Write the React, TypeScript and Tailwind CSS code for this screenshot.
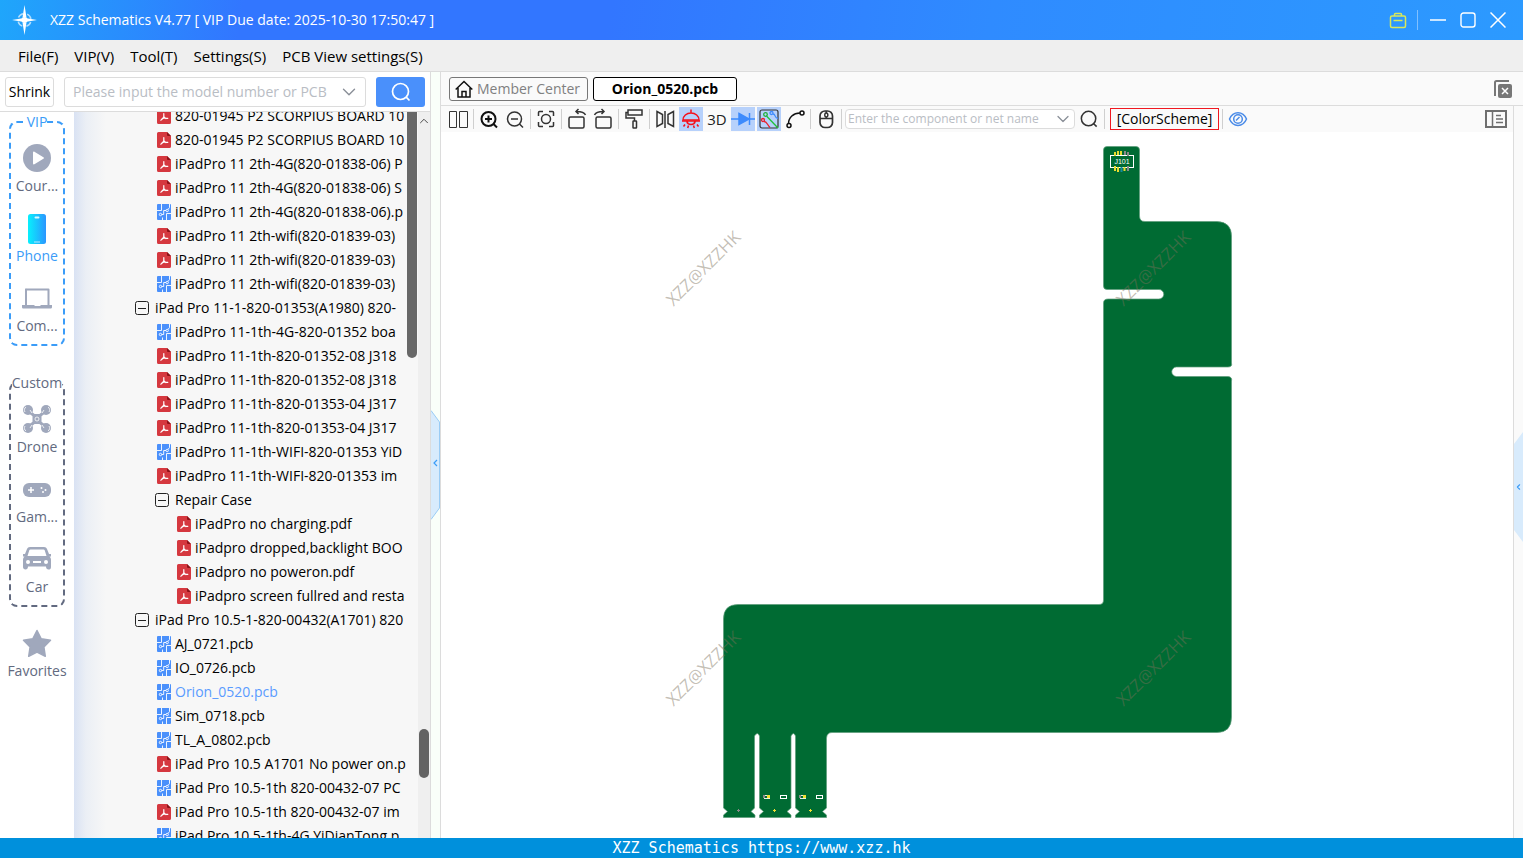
import React, { useState } from 'react';
import { ChevronDown, ChevronUp, ChevronLeft } from 'lucide-react';

type RowKind = 'pdf' | 'pcb' | 'folder';

interface TreeRow {
  kind: RowKind;
  level: 1 | 2 | 3;
  label: string;
}

const rows: TreeRow[] = [
  { kind: 'pdf', level: 2, label: '820-01945 P2 SCORPIUS BOARD 10' },
  { kind: 'pdf', level: 2, label: '820-01945 P2 SCORPIUS BOARD 10' },
  { kind: 'pdf', level: 2, label: 'iPadPro 11 2th-4G(820-01838-06) P' },
  { kind: 'pdf', level: 2, label: 'iPadPro 11 2th-4G(820-01838-06) S' },
  { kind: 'pcb', level: 2, label: 'iPadPro 11 2th-4G(820-01838-06).p' },
  { kind: 'pdf', level: 2, label: 'iPadPro 11 2th-wifi(820-01839-03)' },
  { kind: 'pdf', level: 2, label: 'iPadPro 11 2th-wifi(820-01839-03)' },
  { kind: 'pcb', level: 2, label: 'iPadPro 11 2th-wifi(820-01839-03)' },
  { kind: 'folder', level: 1, label: 'iPad Pro 11-1-820-01353(A1980) 820-' },
  { kind: 'pcb', level: 2, label: 'iPadPro 11-1th-4G-820-01352 boa' },
  { kind: 'pdf', level: 2, label: 'iPadPro 11-1th-820-01352-08 J318' },
  { kind: 'pdf', level: 2, label: 'iPadPro 11-1th-820-01352-08 J318' },
  { kind: 'pdf', level: 2, label: 'iPadPro 11-1th-820-01353-04 J317' },
  { kind: 'pdf', level: 2, label: 'iPadPro 11-1th-820-01353-04 J317' },
  { kind: 'pcb', level: 2, label: 'iPadPro 11-1th-WIFI-820-01353 YiD' },
  { kind: 'pdf', level: 2, label: 'iPadPro 11-1th-WIFI-820-01353 im' },
  { kind: 'folder', level: 2, label: 'Repair Case' },
  { kind: 'pdf', level: 3, label: 'iPadPro no charging.pdf' },
  { kind: 'pdf', level: 3, label: 'iPadpro dropped,backlight BOO' },
  { kind: 'pdf', level: 3, label: 'iPadpro no poweron.pdf' },
  { kind: 'pdf', level: 3, label: 'iPadpro screen fullred and resta' },
  { kind: 'folder', level: 1, label: 'iPad Pro 10.5-1-820-00432(A1701) 820' },
  { kind: 'pcb', level: 2, label: 'AJ_0721.pcb' },
  { kind: 'pcb', level: 2, label: 'IO_0726.pcb' },
  { kind: 'pcb', level: 2, label: 'Orion_0520.pcb' },
  { kind: 'pcb', level: 2, label: 'Sim_0718.pcb' },
  { kind: 'pcb', level: 2, label: 'TL_A_0802.pcb' },
  { kind: 'pdf', level: 2, label: 'iPad Pro 10.5 A1701 No power on.p' },
  { kind: 'pcb', level: 2, label: 'iPad Pro 10.5-1th 820-00432-07 PC' },
  { kind: 'pdf', level: 2, label: 'iPad Pro 10.5-1th 820-00432-07 im' },
  { kind: 'pcb', level: 2, label: 'iPad Pro 10.5-1th-4G YiDianTong.p' },
];

const filePad = { 1: 'pl-[63px]', 2: 'pl-[83px]', 3: 'pl-[103px]' };
const folderPad = { 1: 'pl-[61px]', 2: 'pl-[81px]', 3: 'pl-[101px]' };

const PdfIcon = () => (
  <svg width="14" height="16" viewBox="0 0 14 16" className="shrink-0">
    <path d="M1.500 0H10l4 4v10.500a1.500 1.500 0 0 1-1.500 1.500h-11A1.500 1.500 0 0 1 0 14.500v-13A1.500 1.500 0 0 1 1.500 0z" fill="#d5383f" />
    <path d="M10 0l4 4h-3a1 1 0 0 1-1-1z" fill="#8c1218" />
    <path d="M6.800 5.500v3.200M6.800 8.700C6.300 10 5 11.500 3.800 12.200M5.200 10.600c1.500-.6 3.500-.9 5.600-.2M6.800 8.700c.6.900 1.300 1.500 2.200 1.900" fill="none" stroke="#fff" strokeWidth="1.200" strokeLinecap="round" />
  </svg>
);

const PcbIcon = () => (
  <svg width="14" height="16" viewBox="0 0 14 16" className="shrink-0">
    <rect width="14" height="16" rx="1" fill="#4a90fb" />
    <g fill="none" stroke="#fff" strokeWidth=".9">
      <path d="M4.500 0v6.500H0M4.700 10.500h2v-4H9M9.500 16V9.500H14M5.500 16v-2.500" />
      <circle cx="3.500" cy="10.500" r="1.200" />
      <circle cx="10.200" cy="6.500" r="1.200" />
      <path d="M11 5.500l1.500-2V0" />
    </g>
  </svg>
);

const FolderToggle = () => (
  <svg width="14" height="14" viewBox="0 0 14 14" className="shrink-0" fill="none" stroke="#222">
    <rect x=".5" y=".5" width="13" height="13" rx="2" />
    <path d="M3 7.500h8" />
  </svg>
);

const SearchIcon = ({ size, color }: { size: number; color: string }) => (
  <svg width={size} height={size} viewBox="0 0 20 20" fill="none" stroke={color} strokeWidth="1.700">
    <circle cx="9.500" cy="9.500" r="8" />
    <path d="M15.200 15.200l3.300 3.300" />
  </svg>
);

interface NavItemProps {
  label: string;
  active?: boolean;
  children: React.ReactNode;
}

const NavItem = ({ label, active, children }: NavItemProps) => (
  <button className={`flex h-[60px] w-full flex-col items-center gap-1 text-sm leading-5 ${active ? 'text-[#3b9cf8]' : 'text-[#626a80]'}`}>
    <svg width="30" height="28" viewBox="0 0 30 28" className="shrink-0 overflow-visible" fill="#a0a8bc">
      {children}
    </svg>
    <span className="whitespace-nowrap">{label}</span>
  </button>
);

const Sidebar = () => (
  <nav className="flex w-[74px] shrink-0 flex-col items-center bg-white pt-0.5">
    <fieldset className="w-14 min-w-0 rounded-lg border-2 border-dashed border-[#3b9cf8] pt-3.5">
      <legend className="mx-auto text-sm leading-4 text-[#3b9cf8]">VIP</legend>
      <div className="flex flex-col items-center gap-2.5">
        <NavItem label="Cour...">
          <circle cx="15" cy="14" r="14" />
          <path d="M11 8.500c0-.8.700-1.200 1.400-.8l9 5.500c.7.400.7 1.200 0 1.600l-9 5.500c-.7.400-1.400 0-1.400-.8z" fill="#fff" />
        </NavItem>
        <NavItem label="Phone" active>
          <defs>
            <linearGradient id="phoneFill">
              <stop offset="0" stopColor="#08f0fc" />
              <stop offset="1" stopColor="#2b96ff" />
            </linearGradient>
          </defs>
          <rect x="6" y="0" width="18" height="30" rx="2.500" fill="url(#phoneFill)" />
          <rect x="12.500" y="2.500" width="5" height="2" rx="1" fill="#d8faff" />
          <rect x="12" y="27.500" width="6" height="1" fill="#b8eaff" />
        </NavItem>
        <NavItem label="Com...">
          <path d="M4.500 4.500h22a1 1 0 0 1 1 1V21h2.500v2c0 1-.7 1.500-1.500 1.500h-27C.700 24.500 0 24 0 23v-2h3V5.500a1 1 0 0 1 1.500-1zM5 6.500V21h7l1 1h5l1-1h6.500V6.500z" fillRule="evenodd" />
        </NavItem>
      </div>
    </fieldset>

    <fieldset className="mt-[29px] w-14 min-w-0 rounded-lg border-2 border-dashed border-[#626a80] pt-3.5">
      <legend className="mx-auto text-sm leading-4 text-[#626a80]">Custom</legend>
      <div className="flex flex-col items-center gap-2.5">
        <NavItem label="Drone">
          <path d="M5 5l7 5.500h6L25 5M5 23l7-5.500h6l7 5.500" stroke="#a0a8bc" strokeWidth="3" fill="none" />
          <rect x="10.500" y="9" width="9" height="10" rx="3" />
          <circle cx="6" cy="5" r="5" />
          <circle cx="24" cy="5" r="5" />
          <circle cx="6" cy="23" r="5" />
          <circle cx="24" cy="23" r="5" />
          <g fill="none" stroke="#fff" strokeWidth=".8">
            <circle cx="15" cy="14" r="2" />
            <path d="M3 7a3.500 3.500 0 0 1 1-5M27 7a3.500 3.500 0 0 0-1-5M3 21a3.500 3.500 0 0 0 1 5M27 21a3.500 3.500 0 0 1-1 5" />
            <path d="M8 5l2 3M22 5l-2 3M8 23l2-3M22 23l-2-3" />
          </g>
        </NavItem>
        <NavItem label="Gam...">
          <rect x="1" y="8" width="28" height="14" rx="6" />
          <path d="M9 12v6M6 15h6" stroke="#fff" strokeWidth="1.500" />
          <circle cx="19.500" cy="13" r="1" fill="#fff" />
          <circle cx="21" cy="17" r="1" fill="#fff" />
          <circle cx="23.500" cy="15" r="1" fill="#fff" />
        </NavItem>
        <NavItem label="Car">
          <path
            d="M8 2h14c1.500 0 2.500.8 3 2l2 5h2v2.500h-1.500c1 .8 1.500 2 1.500 3.500v7c0 2-1 2.500-2.500 2.500S24 23.500 24 21.500H6C6 23.500 5 24.500 3.500 24.500S1 23.500 1 22v-7c0-1.500.5-2.700 1.500-3.500H1V9h2l2-5c.5-1.200 1.500-2 3-2zM8.500 4.500c-.6 0-1 .3-1.200.8L5.500 11h19l-1.800-5.700c-.2-.5-.6-.8-1.200-.8zM6 15a2 2 0 1 0 .01 4A2 2 0 0 0 6 15zM24 15a2 2 0 1 0 .01 4A2 2 0 0 0 24 15zM11 16v2h8v-2z"
            fillRule="evenodd"
          />
        </NavItem>
      </div>
    </fieldset>

    <div className="mt-[22px] w-full">
      <NavItem label="Favorites">
        <path d="M15 1.500l4.200 8.300 9.300 1.500-6.600 6.700 1.400 9.300-8.300-4.200-8.300 4.200L8.100 18 1.500 11.300l9.300-1.500z" stroke="#a0a8bc" strokeWidth="1.500" strokeLinejoin="round" />
      </NavItem>
    </div>
  </nav>
);

interface FileTreeProps {
  selected: number;
  onSelect: (index: number) => void;
}

const FileTree = ({ selected, onSelect }: FileTreeProps) => (
  <div className="flex min-w-0 flex-1 bg-[linear-gradient(90deg,#d9e2f3_0px,#ebeff5_12px,#f7f7f7_32px)]">
    <ul className="-mt-2 min-w-0 flex-1">
      {rows.map((row, i) => (
        <li key={i}>
          <button
            onClick={() => onSelect(i)}
            className={`flex h-6 w-full items-center overflow-hidden whitespace-nowrap text-sm ${
              row.kind === 'folder' ? `gap-1.5 ${folderPad[row.level]}` : `gap-1 ${filePad[row.level]}`
            } ${selected === i ? 'text-[#5a9bff]' : 'text-black'}`}
          >
            {row.kind === 'folder' && <FolderToggle />}
            {row.kind === 'pdf' && <PdfIcon />}
            {row.kind === 'pcb' && <PcbIcon />}
            <span>{row.label}</span>
          </button>
        </li>
      ))}
    </ul>
    {/* Inner scroll thumb */}
    <div className="w-3 px-px">
      <div className="h-[246px] rounded-b-full bg-[#686868]" />
    </div>
    {/* Outer scrollbar */}
    <div className="flex w-3 flex-col items-center bg-[#efefef] pt-0.5">
      <ChevronUp size={14} className="shrink-0 text-[#333]" strokeWidth={1.5} />
      <div className="mt-[601px] h-[49px] w-2.5 shrink-0 rounded-full bg-[#636363]" />
    </div>
  </div>
);

const Separator = () => <div className="mx-px h-5 w-px shrink-0 bg-[#cfcfcf]" />;

interface ToolButtonProps {
  title: string;
  on?: boolean;
  color?: string;
  children: React.ReactNode;
}

const ToolButton = ({ title, on, color = '#333', children }: ToolButtonProps) => (
  <button title={title} aria-label={title} className={`flex h-6 w-6 shrink-0 items-center justify-center ${on ? 'bg-[#b7d1fb]' : ''}`}>
    <svg width="24" height="24" viewBox="0 0 24 24" fill="none" stroke={color} strokeWidth="1.500">
      {children}
    </svg>
  </button>
);

const Toolbar = () => (
  <div className="flex h-[26px] items-center gap-0.5 bg-[#fafafa] pl-[5px] pr-1.5">
    <ToolButton title="Split view">
      <path d="M3.500 4.500h7v16h-7zM13.500 4.500h8v16h-8z" strokeWidth="1" />
    </ToolButton>
    <Separator />
    <ToolButton title="Zoom in" color="#111">
      <circle cx="11.500" cy="12" r="7" strokeWidth="2" />
      <path d="M8 12h7M11.500 8.500v7M16.500 17l3.500 3.500" strokeWidth="2" />
    </ToolButton>
    <ToolButton title="Zoom out">
      <circle cx="11.500" cy="12" r="7" />
      <path d="M8 12h7M16.500 17l3.500 3.500" />
    </ToolButton>
    <Separator />
    <ToolButton title="Fit to screen">
      <path d="M4.500 9V5.500a1 1 0 0 1 1-1H9M15 4.500h3.500a1 1 0 0 1 1 1V9M19.500 15v3.500a1 1 0 0 1-1 1H15M9 19.500H5.500a1 1 0 0 1-1-1V15" />
      <circle cx="12" cy="12" r="4.500" />
    </ToolButton>
    <Separator />
    <ToolButton title="Rotate left">
      <rect x="4" y="10" width="15" height="11" rx="1.500" />
      <path d="M20.500 8c-1-2.500-4-3.500-9-3.500M13.500 2L11 4.500 13.500 7" />
    </ToolButton>
    <ToolButton title="Rotate right">
      <rect x="5" y="10" width="15" height="11" rx="1.500" />
      <path d="M3.500 8c1-2.500 4-3.500 9-3.500M10.500 2L13 4.500 10.500 7" />
    </ToolButton>
    <Separator />
    <ToolButton title="Format painter">
      <rect x="6" y="3" width="14" height="5" />
      <path d="M6 5.500H4V11h8.500v3" />
      <rect x="11" y="14" width="3.500" height="7" rx=".5" />
    </ToolButton>
    <Separator />
    <ToolButton title="Mirror">
      <path d="M4 4.500l5.500 3v9l-5.500 3zM12 4v17M20.500 4.500l-5.500 3v9l5.500 3z" />
    </ToolButton>
    <ToolButton title="Lamp" on color="#f5101a">
      <path d="M12 2.500V6M4 13c0-4 3.500-7 8-7s8 3 8 7z" />
      <path d="M3 14h18M8 14.500c.5 4 7.500 4 8 0" strokeWidth="1.700" />
      <path d="M6 17.500L4.500 19.500M9.500 18.500l-.8 2.500M14.500 18.500l.8 2.500M18 17.500l1.500 2" />
    </ToolButton>
    <button className="h-6 w-6 shrink-0 whitespace-nowrap text-center text-[15px] text-[#222]">3D</button>
    <ToolButton title="Diode" on color="#3d8bfd">
      <path d="M0 12h24M18.500 6v12" />
      <path d="M8 6.500l10 5.500-10 5.500z" fill="#3d8bfd" />
    </ToolButton>
    <ToolButton title="Net colors" on color="#333">
      <rect x="3" y="3" width="18" height="18" rx="2" strokeWidth="1.200" />
      <g strokeWidth="1.300">
        <circle cx="8.500" cy="7.500" r="1.800" stroke="#20b038" />
        <path d="M9.500 9L21 21" stroke="#20c038" />
        <circle cx="14.500" cy="6" r="1.500" stroke="#3d8bfd" />
        <path d="M16 7c3 0 1 4 5 4.500" stroke="#3d8bfd" />
        <circle cx="6" cy="13" r="1.500" stroke="#e8202c" />
        <path d="M7 14.500c3 0 3 3 6 6" stroke="#e8202c" />
      </g>
    </ToolButton>
    <ToolButton title="Trace" color="#111">
      <circle cx="6" cy="18.500" r="2" />
      <circle cx="19" cy="6" r="2" />
      <path d="M5.500 16.500c0-6 5-10.500 11.500-10.500" />
    </ToolButton>
    <Separator />
    <ToolButton title="Mouse settings">
      <rect x="6" y="4" width="12.500" height="16.500" rx="5" strokeWidth="1.700" />
      <path d="M6 11.500h12.500M12.250 4v7" />
      <rect x="10.800" y="6" width="3" height="4" rx="1.500" fill="#fafafa" />
    </ToolButton>
    <Separator />
    <div className="flex h-5 w-[230px] shrink-0 items-center rounded-sm border border-[#dcdcdc] bg-white pl-0.5 pr-px">
      <input
        aria-label="Component or net name"
        placeholder="Enter the component or net name"
        className="min-w-0 flex-1 bg-transparent text-xs outline-none placeholder:text-[#b9bdc4]"
      />
      <button aria-label="Search history" className="shrink-0">
        <ChevronDown size={20} className="text-[#8a8f98]" strokeWidth={1.5} />
      </button>
    </div>
    <button aria-label="Find" className="flex h-6 w-6 shrink-0 items-center justify-center">
      <SearchIcon size={18} color="#333" />
    </button>
    <Separator />
    <button className="ml-0.5 h-[22px] w-[109px] shrink-0 whitespace-nowrap border border-[#f01820] text-center text-sm leading-5 text-black">
      [ColorScheme]
    </button>
    <Separator />
    <ToolButton title="Visibility" color="#4a8be8">
      <path d="M3.500 12C7 3.500 17 3.500 20.500 12 17 20.500 7 20.500 3.500 12z" />
      <circle cx="12" cy="12" r="4.300" />
      <path d="M10 13.500l3.500-3.500" />
    </ToolButton>
    <button aria-label="Side panel" className="ml-auto shrink-0">
      <svg width="22" height="18" viewBox="0 0 22 18" fill="none" stroke="#6f6f6f">
        <rect x="1" y="1" width="20" height="16" strokeWidth="2" />
        <path d="M7.500 1v16" strokeWidth="1.500" />
        <path d="M11 5.500h5M11 9h7M11 12.500h7" strokeWidth="1.500" />
      </svg>
    </button>
  </div>
);

const boardOutline =
  'M1107 146.500H1136Q1139.500 146.500 1139.500 150V216Q1139.500 221.500 1145 221.500H1217Q1231.500 222 1231.500 236V363Q1232.500 367 1228 367H1176.500' +
  'A4.700 4.700 0 0 0 1176.500 376.500H1228Q1232.500 377 1231.500 381V717Q1231.500 732.500 1217 732.500H832Q827 732.500 826.500 738V808L822.500 811.500L826.500 815V817.500H795.500' +
  'V815L799.500 811.500L795.500 808V736Q793.500 731 791 736V808L787 811.500L791 815V817.500H759.500V815L763.500 811.500L759.500 808V736Q757.500 731 754.500 736V808L751 811.500L755 815' +
  'V817.500H723.500V815L727.500 811.500L723.500 808V619Q723.500 604.500 738 604.500H1099Q1103.500 604.500 1103.500 600V303Q1103.500 299 1108 299H1159' +
  'A4.700 4.700 0 0 0 1159 289.500H1107Q1103.500 289.500 1103.500 286V150Q1103.500 146.500 1107 146.500Z';

const watermarks = [
  [703, 268],
  [1153, 268],
  [703, 668],
  [1153, 668],
];

const BoardView = () => (
  <svg viewBox="441 132 1072 706" className="block min-h-0 w-full flex-1 bg-white">
    <path d={boardOutline} fill="#006b33" stroke="#5d9c7a" strokeWidth=".7" />

    {/* J101 connector */}
    <rect x="1110.500" y="155.500" width="23" height="12" fill="none" stroke="#fff" />
    <g strokeWidth="2">
      <path d="M1115 152v4M1118 151v4M1121 151v4M1115 166v5M1118 167v5M1124.500 167v4" stroke="#e8dc30" />
      <path d="M1125 151v4M1128 152v4M1128 166v5" stroke="#8a8a8a" />
      <path d="M1121.500 167v5" stroke="#168aa0" />
    </g>
    <text x="1122" y="164" fontSize="7" textAnchor="middle" fill="#fff" className="font-['Liberation_Sans',sans-serif]">J101</text>

    {/* Flex tail pads */}
    {[764, 800].map(x => (
      <g key={x}>
        <rect x={x + 0.5} y="795.500" width="5" height="3" fill="none" stroke="#e8f2e8" />
        <rect x={x + 3} y="795" width="3" height="3" fill="#f0e030" />
        <rect x={x - 1} y="795" width="2" height="3" fill="#8a8a8a" />
        <rect x={x + 16.5} y="795.500" width="6" height="3" fill="none" stroke="#fff" />
        <path d={`M${x + 9} 810.500h3M${x + 10.5} 809v3`} stroke="#f0e030" />
      </g>
    ))}
    <path d="M737 810.500h3M738.500 809v3" stroke="#8a8a8a" />

    {watermarks.map(([x, y]) => (
      <text
        key={`${x}-${y}`}
        x={x}
        y={y}
        fontSize="17"
        textAnchor="middle"
        dominantBaseline="central"
        transform={`rotate(-45 ${x} ${y})`}
        fill="#7c705c"
        fillOpacity=".45"
      >
        XZZ@XZZHK
      </text>
    ))}
  </svg>
);

const PanelHandle = () => (
  <svg width="9" height="110" viewBox="0 0 9 110" fill="#d8ebfc" stroke="#9accf5">
    <path d="M0 .5L8.500 12V98L0 109.500" />
    <path d="M6 50L3 53l3 3" fill="none" stroke="#3b9cf8" strokeWidth="1.200" />
  </svg>
);

const App: React.FC = () => {
  const [selected, setSelected] = useState(24);

  return (
    <div className="flex h-screen w-full flex-col overflow-hidden bg-white font-['Open_Sans','Noto_Sans',sans-serif] text-black">
      {/* Title bar */}
      <header className="flex h-10 shrink-0 items-center bg-[linear-gradient(100deg,#1fa6fb_0%,#3276ff_16%,#3276ff_40%,#2f8bff_65%,#2c9aff_100%)] px-3 text-white">
        <svg width="26" height="30" viewBox="0 0 26 30" fill="#fff">
          <path d="M12.500 0l2 12.500h-4zM12.500 30l2-12.500h-4zM0 15l10.500-1.700v3.400zM25 15l-10.500-1.700v3.400z" />
          <circle cx="12.500" cy="15" r="3" />
          <circle cx="12.500" cy="15" r="6.500" fill="none" stroke="#fff" strokeOpacity=".65" strokeWidth="1.500" strokeDasharray="6 4.210" strokeDashoffset="-2" />
        </svg>
        <h1 className="ml-3 whitespace-nowrap text-sm">XZZ Schematics V4.77 [ VIP Due date: 2025-10-30 17:50:47 ]</h1>
        <div className="ml-auto flex items-center">
          <button aria-label="Toolbox">
            <svg width="18" height="18" viewBox="0 0 18 18" fill="none" stroke="#d9e85a" strokeWidth="1.500">
              <rect x="1.500" y="5" width="15" height="11.500" rx="1.500" />
              <path d="M5.500 5V3.500a1 1 0 0 1 1-1h5a1 1 0 0 1 1 1V5M4.500 9.500h9" />
            </svg>
          </button>
          <div className="ml-2.5 h-5 w-px bg-white/40" />
          <button aria-label="Minimize" className="ml-3">
            <svg width="16" height="16" viewBox="0 0 16 16" stroke="#fff" strokeWidth="1.500">
              <path d="M0 8h16" />
            </svg>
          </button>
          <button aria-label="Maximize" className="ml-3.5">
            <svg width="16" height="16" viewBox="0 0 16 16" fill="none" stroke="#fff" strokeWidth="1.400">
              <rect x="1" y="1" width="14" height="14" rx="2.500" />
            </svg>
          </button>
          <button aria-label="Close" className="ml-3.5 mr-[5px]">
            <svg width="16" height="16" viewBox="0 0 16 16" stroke="#fff" strokeWidth="1.500">
              <path d="M.5.5l15 15M15.500.5l-15 15" />
            </svg>
          </button>
        </div>
      </header>

      {/* Menu */}
      <div className="flex h-8 shrink-0 items-center gap-4 border-b border-[#dcdcdc] bg-[#efefef] px-[18px] pt-px text-[15px]">
        <button>File(F)</button>
        <button>VIP(V)</button>
        <button>Tool(T)</button>
        <button>Settings(S)</button>
        <button>PCB View settings(S)</button>
      </div>

      <div className="flex min-h-0 flex-1">
        {/* Left panel */}
        <aside className="flex w-[431px] shrink-0 flex-col border-r border-[#dcdcdc]">
          <div className="flex h-10 shrink-0 items-center border-b border-[#dcdcdc] bg-white pl-[5px] pr-[5px]">
            <button className="h-[30px] w-[49px] rounded-[3px] border border-[#dcdcdc] text-center text-sm">Shrink</button>
            <div className="ml-2.5 flex h-[30px] min-w-0 flex-1 items-center rounded-[3px] border border-[#dcdcdc] pl-2 pr-[5px]">
              <input
                aria-label="Model number"
                placeholder="Please input the model number or PCB"
                className="min-w-0 flex-1 bg-transparent text-sm outline-none placeholder:text-[#b9bdc4]"
              />
              <button aria-label="Model history" className="shrink-0">
                <ChevronDown size={22} className="text-[#8a8f98]" strokeWidth={1.5} />
              </button>
            </div>
            <button aria-label="Search" className="ml-2.5 flex h-[30px] w-[49px] items-center justify-center rounded-[3px] bg-[#4a90fb]">
              <SearchIcon size={20} color="#fff" />
            </button>
          </div>
          <div className="flex min-h-0 flex-1 overflow-hidden">
            <Sidebar />
            <FileTree selected={selected} onSelect={setSelected} />
          </div>
        </aside>

        {/* Splitter */}
        <div className="flex w-[9px] shrink-0 items-center bg-[#f9fff9]">
          <button aria-label="Collapse file panel" className="mt-5">
            <PanelHandle />
          </button>
        </div>

        {/* Viewer */}
        <main className="flex min-w-0 flex-1 flex-col border-l border-[#dcdcdc]">
          <div className="flex h-[34px] shrink-0 items-center gap-[5px] border-b border-[#dcdcdc] bg-[#fafafa] pl-2 pr-[11px] text-sm">
            <button className="flex h-6 w-[139px] items-center gap-1 whitespace-nowrap rounded-[3px] border border-[#777] pl-[5px] text-[#808080]">
              <svg width="18" height="18" viewBox="0 0 18 18" fill="none" stroke="#111" strokeWidth="1.500" className="shrink-0">
                <path d="M.7 9.500L9 1.500l8.300 8M3 8v9h12V8M7 17v-5.500h4V17" />
              </svg>
              Member Center
            </button>
            <button className="h-6 w-36 whitespace-nowrap rounded-[3px] border border-black bg-white text-center font-bold">Orion_0520.pcb</button>
            <button aria-label="Close all tabs" className="ml-auto">
              <svg width="18" height="18" viewBox="0 0 18 18">
                <path d="M1 16V2.500A1.500 1.500 0 0 1 2.500 1H15" fill="none" stroke="#777" strokeWidth="2" />
                <rect x="4" y="4" width="14" height="14" rx="2" fill="#777" />
                <path d="M8 8l6 6M14 8l-6 6" stroke="#fff" strokeWidth="1.500" />
              </svg>
            </button>
          </div>
          <div className="flex min-h-0 flex-1">
            <div className="flex min-w-0 flex-1 flex-col">
              <Toolbar />
              <BoardView />
            </div>
            <div className="flex w-2.5 shrink-0 items-center border-l border-[#dcdcdc] bg-[#fafafa]">
              <button aria-label="Expand side panel" className="mt-[30px] flex h-[110px] w-[9px] items-center justify-center bg-[#d8ebfc] text-[#3b9cf8] [clip-path:polygon(0_12px,100%_0,100%_100%,0_98px)]">
                <ChevronLeft size={10} strokeWidth={3} />
              </button>
            </div>
          </div>
        </main>
      </div>

      <footer className="flex h-5 shrink-0 items-center justify-center bg-[#0090dc] font-['DejaVu_Sans_Mono',monospace] text-[15px] text-white">
        XZZ Schematics https://www.xzz.hk
      </footer>
    </div>
  );
};

export default App;
